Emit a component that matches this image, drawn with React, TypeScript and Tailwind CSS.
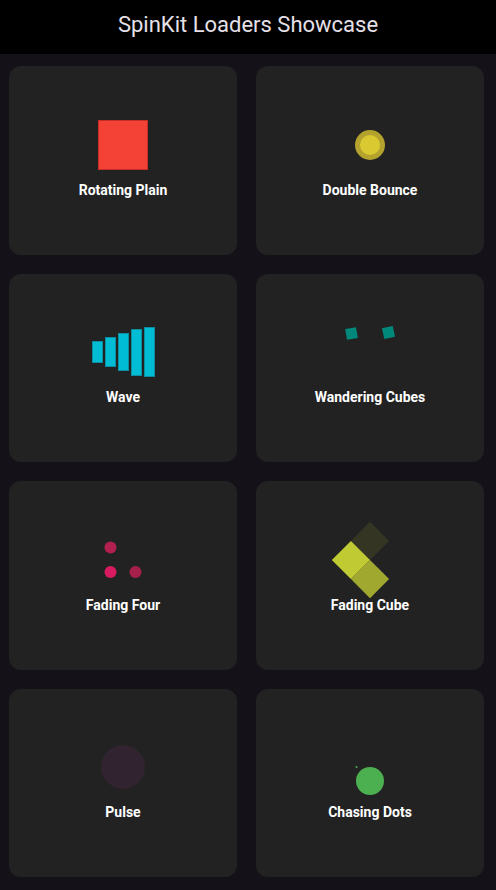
const loaders = [
  { name: "Rotating Plain", icon: <RotatingPlain /> },
  { name: "Double Bounce", icon: <DoubleBounce /> },
  { name: "Wave", icon: <Wave /> },
  { name: "Wandering Cubes", icon: <WanderingCubes /> },
  { name: "Fading Four", icon: <FadingFour /> },
  { name: "Fading Cube", icon: <FadingCube /> },
  { name: "Pulse", icon: <Pulse /> },
  { name: "Chasing Dots", icon: <ChasingDots /> },
];

function RotatingPlain() {
  return (
    <svg width="50" height="50" viewBox="0 0 50 50">
      <rect x="0.5" y="0.5" width="49" height="49" fill="#f44336" stroke="#c62e25" strokeWidth="1" />
    </svg>
  );
}

function DoubleBounce() {
  return (
    <svg width="50" height="50" viewBox="0 0 50 50">
      <circle cx="25" cy="25" r="15" fill="#b3a32e" />
      <circle cx="25" cy="25" r="10" fill="#dbc932" />
    </svg>
  );
}

function Wave() {
  const bars = [
    { x: 0, y: 14, h: 22 },
    { x: 13, y: 10, h: 30 },
    { x: 26, y: 6, h: 38 },
    { x: 39, y: 2, h: 47 },
    { x: 52, y: 0, h: 50 },
  ];
  return (
    <svg width="63" height="50" viewBox="0 0 63 50">
      {bars.map((b) => (
        <rect key={b.x} x={b.x + 0.5} y={b.y + 0.5} width="10" height={b.h - 1} fill="#00bcd4" stroke="#0a8fa1" strokeWidth="1" />
      ))}
    </svg>
  );
}

function WanderingCubes() {
  return (
    <svg width="50" height="50" viewBox="0 0 50 50" overflow="visible">
      <rect x="1" y="1" width="11" height="11" fill="#00897b" transform="rotate(-10 6.5 6.5)" />
      <rect x="38" y="0" width="11" height="11" fill="#00897b" transform="rotate(-12 43.5 5.5)" />
    </svg>
  );
}

function FadingFour() {
  return (
    <svg width="50" height="50" viewBox="0 0 50 50">
      <circle cx="12.5" cy="12.5" r="6" fill="#b1204f" />
      <circle cx="12.5" cy="37" r="6" fill="#d81b60" />
      <circle cx="37.5" cy="37" r="6" fill="#a5214c" />
    </svg>
  );
}

function FadingCube() {
  return (
    <svg width="50" height="50" viewBox="0 0 50 50" overflow="visible">
      <g transform="rotate(45 25 25)">
        <rect x="-2" y="-2" width="27" height="27" fill="#c0ca33" opacity="0.12" />
        <rect x="25" y="25" width="27" height="27" fill="#c0ca33" opacity="0.8" />
        <rect x="-2" y="25" width="27" height="27" fill="#c0ca33" />
      </g>
    </svg>
  );
}

function Pulse() {
  return (
    <svg width="50" height="50" viewBox="0 0 50 50">
      <circle cx="25" cy="25" r="22" fill="#31232f" />
    </svg>
  );
}

function ChasingDots() {
  return (
    <svg width="50" height="50" viewBox="0 0 50 50" overflow="visible">
      <circle cx="11.5" cy="25" r="1" fill="#4caf50" />
      <circle cx="25" cy="39" r="14" fill="#4caf50" />
    </svg>
  );
}

export default function App() {
  return (
    <main className="min-h-screen bg-[#141218] font-['Roboto',sans-serif]">
      {/* Header */}
      <header className="h-[54px] bg-black flex items-center justify-center">
        <h1 className="text-[22px] text-[#e6e0e9] leading-none -mt-[4px]">SpinKit Loaders Showcase</h1>
      </header>

      {/* Loader grid */}
      <div className="grid grid-cols-2 gap-x-[19px] gap-y-[19px] pl-[9px] pr-[12px] pt-3 pb-4">
        {loaders.map((l) => (
          <div key={l.name} className="h-[188.5px] rounded-xl bg-[#222222] flex flex-col items-center justify-center">
            <div className="h-[50px] flex items-center justify-center -mt-[2px]">{l.icon}</div>
            <p className="mt-[12px] text-white text-[14px] font-bold leading-[17px]">{l.name}</p>
          </div>
        ))}
      </div>
    </main>
  );
}
